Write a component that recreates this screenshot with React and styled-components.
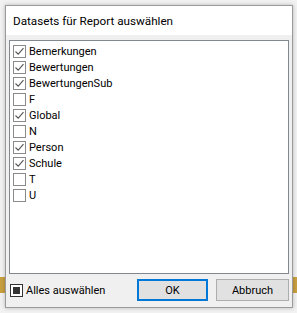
import styled, { createGlobalStyle } from "styled-components";

const Global = createGlobalStyle`
    html, body {
        margin: 0;
        padding: 0;
    }
    body {
        font-family: Roboto, "Noto Sans", sans-serif;
        font-size: 11px;
    }
`

const Escritorio = styled.div`
    width: 297px;
    height: 313px;
    box-sizing: border-box;
    padding: 5px 4px 5px 5px;
    background:
        linear-gradient(180deg, transparent 277px, #c8a040 277px, #c8a040 293px, transparent 293px),
        #f2f2f2;
    display: flex;
`

const Ventana = styled.div`
    flex: 1;
    display: flex;
    flex-direction: column;
    border: 1px solid #9a9a9a;
    background: #f0f0f0;
    box-shadow: 0 0 4px rgba(0, 0, 0, 0.25);
`

const Titulo = styled.div`
    height: 29px;
    background: #fff;
    display: flex;
    align-items: center;
    padding-left: 7px;
    color: #000;
    font-size: 11.7px;
`

const Cuerpo = styled.div`
    flex: 1;
    display: flex;
    flex-direction: column;
    padding: 5px 3px 5px 3px;
`

const Lista = styled.div`
    height: 234px;
    box-sizing: border-box;
    border: 1px solid #828790;
    background: #fff;
    padding: 2px 0 0 3px;
    display: flex;
    flex-direction: column;
`

const Fila = styled.div`
    height: 16px;
    display: flex;
    align-items: center;
    gap: 3px;
    color: #000;
`

const Casilla = styled.span`
    width: 11px;
    height: 11px;
    border: 1px solid ${p => p.$oscuro ? "#333" : "#8a8a8a"};
    background: #fff;
    display: flex;
    align-items: center;
    justify-content: center;
    flex-shrink: 0;

    svg {
        width: 11px;
        height: 11px;
    }
`

const Relleno = styled.span`
    width: 7px;
    height: 7px;
    background: #333;
`

const Pie = styled.div`
    margin-top: 5px;
    display: flex;
    align-items: center;
`

const TodoLabel = styled.div`
    display: flex;
    align-items: center;
    gap: 3px;
    flex: 1;
    color: #000;
    padding-left: 1px;
`

const Boton = styled.button`
    width: ${p => p.$primario ? "71px" : "73px"};
    height: 22px;
    margin-left: ${p => p.$primario ? "0" : "8px"};
    box-sizing: border-box;
    border: ${p => p.$primario ? "2px solid #0078d7" : "1px solid #adadad"};
    background: #e1e1e1;
    font-family: inherit;
    font-size: 11px;
    color: #000;
    padding: 0;
`

const Check = () => (
    <svg viewBox="0 0 11 11">
        <path d="M1.5 5.5 L4.2 8.2 L9.5 2.2" fill="none" stroke="#555" strokeWidth="1.1" />
    </svg>
)

const datasets = [
    ["Bemerkungen", true],
    ["Bewertungen", true],
    ["BewertungenSub", true],
    ["F", false],
    ["Global", true],
    ["N", false],
    ["Person", true],
    ["Schule", true],
    ["T", false],
    ["U", false],
]

export default function App() {
    return (
        <>
            <Global />
            <Escritorio>
                <Ventana>
                    <Titulo>Datasets für Report auswählen</Titulo>
                    <Cuerpo>
                        <Lista>
                            {datasets.map(([nombre, marcado]) => (
                                <Fila key={nombre}>
                                    <Casilla>{marcado && <Check />}</Casilla>
                                    {nombre}
                                </Fila>
                            ))}
                        </Lista>
                        <Pie>
                            <TodoLabel>
                                <Casilla $oscuro><Relleno /></Casilla>
                                Alles auswählen
                            </TodoLabel>
                            <Boton $primario>OK</Boton>
                            <Boton>Abbruch</Boton>
                        </Pie>
                    </Cuerpo>
                </Ventana>
            </Escritorio>
        </>
    )
}
